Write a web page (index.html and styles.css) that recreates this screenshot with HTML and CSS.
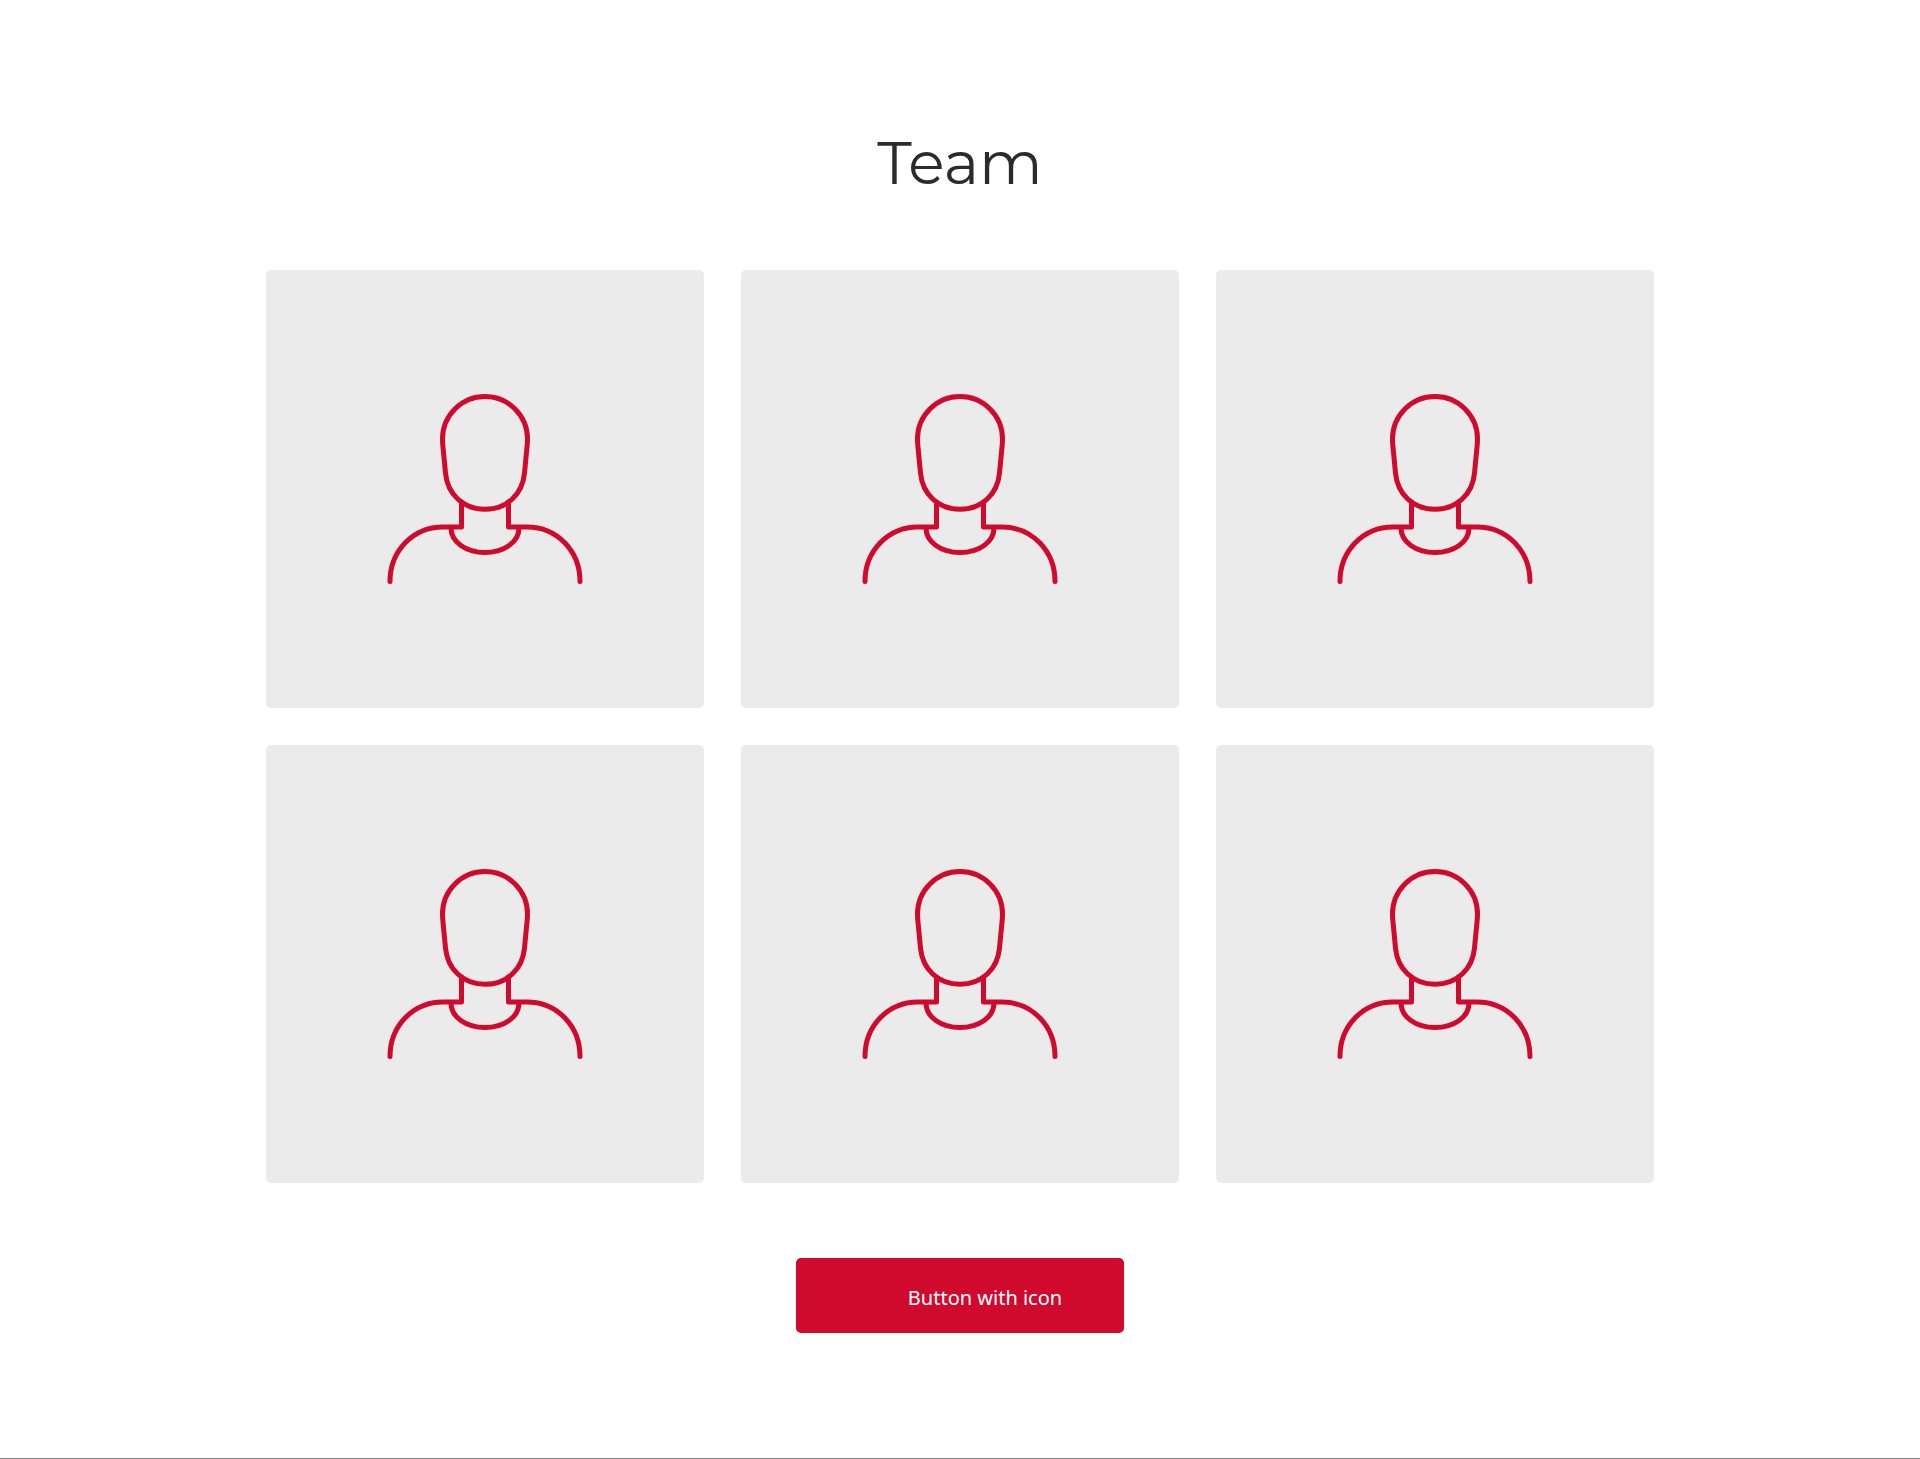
FILE: index.html
```html
<!DOCTYPE html>
<html lang="en">
<head>
    <meta charset="UTF-8">
    <meta name="viewport" content="width=device-width, initial-scale=1.0">
    <title>Team</title>
    <link rel="stylesheet" href="styles.css">
</head>
<body>
    <!-- person icon, shared by all the cards -->
    <svg class="sprite" aria-hidden="true">
        <symbol id="person" viewBox="7 9 196 190">
            <path d="M105 11.500C81.500 11.500 62.500 30.500 62.500 54C62.500 56 62.600 58 62.800 60L65.500 88C67.400 109 83 124.300 105 124.300S142.600 109 144.500 88L147.200 60C147.400 58 147.500 56 147.500 54C147.500 30.500 128.500 11.500 105 11.500Z"/>
            <path d="M81.500 117V142H63C33 142 10 166 10 196.500"/>
            <path d="M128.500 117V142H147C177 142 200 166 200 196.500"/>
            <path d="M71 143C71 157 86 167.500 105 167.500S139 157 139 143"/>
        </symbol>
    </svg>

    <section class="team">
        <h1>Team</h1>
        <div class="container">
            <div class="member"><svg role="img" aria-label="Team member"><use href="#person"/></svg></div>
            <div class="member"><svg role="img" aria-label="Team member"><use href="#person"/></svg></div>
            <div class="member"><svg role="img" aria-label="Team member"><use href="#person"/></svg></div>
            <div class="member"><svg role="img" aria-label="Team member"><use href="#person"/></svg></div>
            <div class="member"><svg role="img" aria-label="Team member"><use href="#person"/></svg></div>
            <div class="member"><svg role="img" aria-label="Team member"><use href="#person"/></svg></div>
        </div>
        <button class="btn" type="button">Button with icon</button>
    </section>
</body>
</html>
```
FILE: styles.css
```css
*{
    box-sizing: border-box;
}
body{
    margin: 0;
    background: #fff;
    font-family: "Noto Sans", sans-serif;
}
.sprite{
    display: none;
}
.team{
    display: flex;
    flex-direction: column;
    align-items: center;
    padding: 123px 20px 125px;
    border-bottom: 1px solid #808080;
}
h1{
    margin: 0 0 67px;
    font-family: "Montserrat", "Lato", sans-serif;
    font-size: 60px;
    font-weight: 400;
    line-height: 80px;
    color: #2b2b2b;
}
/* cards */
.container{
    display: grid;
    grid-template-columns: repeat(3, 1fr);
    gap: 37px;
    width: 100%;
    max-width: 1388px;
}
.member{
    display: flex;
    justify-content: center;
    align-items: center;
    aspect-ratio: 1;
    border-radius: 5px;
    background: #ebebeb;
}
.member svg{
    width: 196px;
    height: 190px;
    fill: none;
    stroke: #cf0a2c;
    stroke-width: 5;
    stroke-linecap: round;
    stroke-linejoin: round;
}
.btn{
    margin-top: 75px;
    padding: 26px 62px 22px 112px;
    border: 0;
    border-radius: 5px;
    background: #cf0a2c;
    color: #fff;
    font-family: inherit;
    font-size: 20px;
    line-height: 27px;
    cursor: pointer;
}
```
